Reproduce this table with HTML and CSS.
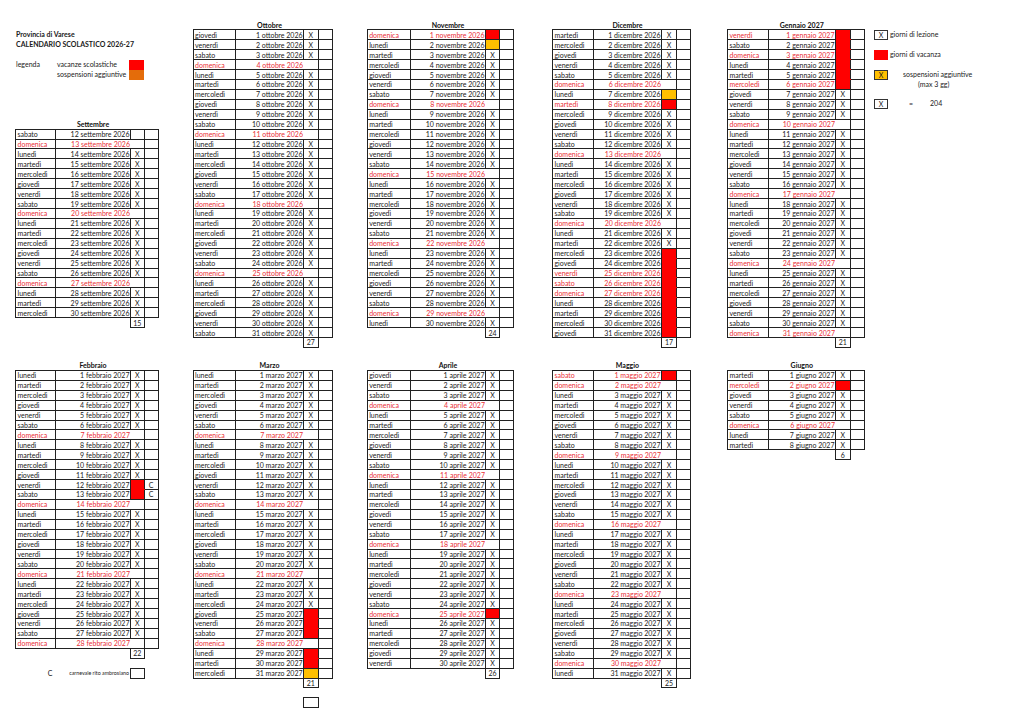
FILE: index.html
```html
<!DOCTYPE html>
<html lang="it">
<head>
<meta charset="utf-8">
<title>Calendario scolastico 2026-27 - Provincia di Varese</title>
<link rel="stylesheet" href="styles.css">
</head>
<body>
<main class="sheet">
<section class="blk top">
  <div class="col">
    <div class="intro">
      <div class="ln bold r2">Provincia di Varese</div>
      <div class="ln bold r3">CALENDARIO SCOLASTICO 2026-27</div>
      <div class="lg r5">legenda</div>
      <div class="lt r5">vacanze scolastiche</div>
      <div class="sw red r5"></div>
      <div class="lt r6">sospensioni aggiuntive</div>
      <div class="sw org r6"></div>
    </div>
    <table class="m ga">
      <colgroup><col class="c1"><col class="c2"><col class="c3"><col class="c4"></colgroup>
      <tr class="t"><th></th><th>Settembre</th><th></th><th></th></tr>
      <tr><td>sabato</td><td>12 settembre 2026</td><td></td><td></td></tr>
      <tr class="r"><td>domenica</td><td>13 settembre 2026</td><td></td><td></td></tr>
      <tr><td>lunedì</td><td>14 settembre 2026</td><td>X</td><td></td></tr>
      <tr><td>martedì</td><td>15 settembre 2026</td><td>X</td><td></td></tr>
      <tr><td>mercoledì</td><td>16 settembre 2026</td><td>X</td><td></td></tr>
      <tr><td>giovedì</td><td>17 settembre 2026</td><td>X</td><td></td></tr>
      <tr><td>venerdì</td><td>18 settembre 2026</td><td>X</td><td></td></tr>
      <tr><td>sabato</td><td>19 settembre 2026</td><td>X</td><td></td></tr>
      <tr class="r"><td>domenica</td><td>20 settembre 2026</td><td></td><td></td></tr>
      <tr><td>lunedì</td><td>21 settembre 2026</td><td>X</td><td></td></tr>
      <tr><td>martedì</td><td>22 settembre 2026</td><td>X</td><td></td></tr>
      <tr><td>mercoledì</td><td>23 settembre 2026</td><td>X</td><td></td></tr>
      <tr><td>giovedì</td><td>24 settembre 2026</td><td>X</td><td></td></tr>
      <tr><td>venerdì</td><td>25 settembre 2026</td><td>X</td><td></td></tr>
      <tr><td>sabato</td><td>26 settembre 2026</td><td>X</td><td></td></tr>
      <tr class="r"><td>domenica</td><td>27 settembre 2026</td><td></td><td></td></tr>
      <tr><td>lunedì</td><td>28 settembre 2026</td><td>X</td><td></td></tr>
      <tr><td>martedì</td><td>29 settembre 2026</td><td>X</td><td></td></tr>
      <tr><td>mercoledì</td><td>30 settembre 2026</td><td>X</td><td></td></tr>
      <tr class="tot"><td></td><td></td><td>15</td><td></td></tr>
    </table>
  </div>

  <div class="col">
    <table class="m gb">
      <colgroup><col class="c1"><col class="c2"><col class="c3"><col class="c4"></colgroup>
      <tr class="t"><th></th><th>Ottobre</th><th></th><th></th></tr>
      <tr><td>giovedì</td><td>1 ottobre 2026</td><td>X</td><td></td></tr>
      <tr><td>venerdì</td><td>2 ottobre 2026</td><td>X</td><td></td></tr>
      <tr><td>sabato</td><td>3 ottobre 2026</td><td>X</td><td></td></tr>
      <tr class="r"><td>domenica</td><td>4 ottobre 2026</td><td></td><td></td></tr>
      <tr><td>lunedì</td><td>5 ottobre 2026</td><td>X</td><td></td></tr>
      <tr><td>martedì</td><td>6 ottobre 2026</td><td>X</td><td></td></tr>
      <tr><td>mercoledì</td><td>7 ottobre 2026</td><td>X</td><td></td></tr>
      <tr><td>giovedì</td><td>8 ottobre 2026</td><td>X</td><td></td></tr>
      <tr><td>venerdì</td><td>9 ottobre 2026</td><td>X</td><td></td></tr>
      <tr><td>sabato</td><td>10 ottobre 2026</td><td>X</td><td></td></tr>
      <tr class="r"><td>domenica</td><td>11 ottobre 2026</td><td></td><td></td></tr>
      <tr><td>lunedì</td><td>12 ottobre 2026</td><td>X</td><td></td></tr>
      <tr><td>martedì</td><td>13 ottobre 2026</td><td>X</td><td></td></tr>
      <tr><td>mercoledì</td><td>14 ottobre 2026</td><td>X</td><td></td></tr>
      <tr><td>giovedì</td><td>15 ottobre 2026</td><td>X</td><td></td></tr>
      <tr><td>venerdì</td><td>16 ottobre 2026</td><td>X</td><td></td></tr>
      <tr><td>sabato</td><td>17 ottobre 2026</td><td>X</td><td></td></tr>
      <tr class="r"><td>domenica</td><td>18 ottobre 2026</td><td></td><td></td></tr>
      <tr><td>lunedì</td><td>19 ottobre 2026</td><td>X</td><td></td></tr>
      <tr><td>martedì</td><td>20 ottobre 2026</td><td>X</td><td></td></tr>
      <tr><td>mercoledì</td><td>21 ottobre 2026</td><td>X</td><td></td></tr>
      <tr><td>giovedì</td><td>22 ottobre 2026</td><td>X</td><td></td></tr>
      <tr><td>venerdì</td><td>23 ottobre 2026</td><td>X</td><td></td></tr>
      <tr><td>sabato</td><td>24 ottobre 2026</td><td>X</td><td></td></tr>
      <tr class="r"><td>domenica</td><td>25 ottobre 2026</td><td></td><td></td></tr>
      <tr><td>lunedì</td><td>26 ottobre 2026</td><td>X</td><td></td></tr>
      <tr><td>martedì</td><td>27 ottobre 2026</td><td>X</td><td></td></tr>
      <tr><td>mercoledì</td><td>28 ottobre 2026</td><td>X</td><td></td></tr>
      <tr><td>giovedì</td><td>29 ottobre 2026</td><td>X</td><td></td></tr>
      <tr><td>venerdì</td><td>30 ottobre 2026</td><td>X</td><td></td></tr>
      <tr><td>sabato</td><td>31 ottobre 2026</td><td>X</td><td></td></tr>
      <tr class="tot"><td></td><td></td><td>27</td><td></td></tr>
    </table>
  </div>

  <div class="col">
    <table class="m gc">
      <colgroup><col class="c1"><col class="c2"><col class="c3"><col class="c4"></colgroup>
      <tr class="t"><th></th><th>Novembre</th><th></th><th></th></tr>
      <tr class="r"><td>domenica</td><td>1 novembre 2026</td><td class="v"></td><td></td></tr>
      <tr><td>lunedì</td><td>2 novembre 2026</td><td class="a"></td><td></td></tr>
      <tr><td>martedì</td><td>3 novembre 2026</td><td>X</td><td></td></tr>
      <tr><td>mercoledì</td><td>4 novembre 2026</td><td>X</td><td></td></tr>
      <tr><td>giovedì</td><td>5 novembre 2026</td><td>X</td><td></td></tr>
      <tr><td>venerdì</td><td>6 novembre 2026</td><td>X</td><td></td></tr>
      <tr><td>sabato</td><td>7 novembre 2026</td><td>X</td><td></td></tr>
      <tr class="r"><td>domenica</td><td>8 novembre 2026</td><td></td><td></td></tr>
      <tr><td>lunedì</td><td>9 novembre 2026</td><td>X</td><td></td></tr>
      <tr><td>martedì</td><td>10 novembre 2026</td><td>X</td><td></td></tr>
      <tr><td>mercoledì</td><td>11 novembre 2026</td><td>X</td><td></td></tr>
      <tr><td>giovedì</td><td>12 novembre 2026</td><td>X</td><td></td></tr>
      <tr><td>venerdì</td><td>13 novembre 2026</td><td>X</td><td></td></tr>
      <tr><td>sabato</td><td>14 novembre 2026</td><td>X</td><td></td></tr>
      <tr class="r"><td>domenica</td><td>15 novembre 2026</td><td></td><td></td></tr>
      <tr><td>lunedì</td><td>16 novembre 2026</td><td>X</td><td></td></tr>
      <tr><td>martedì</td><td>17 novembre 2026</td><td>X</td><td></td></tr>
      <tr><td>mercoledì</td><td>18 novembre 2026</td><td>X</td><td></td></tr>
      <tr><td>giovedì</td><td>19 novembre 2026</td><td>X</td><td></td></tr>
      <tr><td>venerdì</td><td>20 novembre 2026</td><td>X</td><td></td></tr>
      <tr><td>sabato</td><td>21 novembre 2026</td><td>X</td><td></td></tr>
      <tr class="r"><td>domenica</td><td>22 novembre 2026</td><td></td><td></td></tr>
      <tr><td>lunedì</td><td>23 novembre 2026</td><td>X</td><td></td></tr>
      <tr><td>martedì</td><td>24 novembre 2026</td><td>X</td><td></td></tr>
      <tr><td>mercoledì</td><td>25 novembre 2026</td><td>X</td><td></td></tr>
      <tr><td>giovedì</td><td>26 novembre 2026</td><td>X</td><td></td></tr>
      <tr><td>venerdì</td><td>27 novembre 2026</td><td>X</td><td></td></tr>
      <tr><td>sabato</td><td>28 novembre 2026</td><td>X</td><td></td></tr>
      <tr class="r"><td>domenica</td><td>29 novembre 2026</td><td></td><td></td></tr>
      <tr><td>lunedì</td><td>30 novembre 2026</td><td>X</td><td></td></tr>
      <tr class="tot"><td></td><td></td><td>24</td><td></td></tr>
    </table>
  </div>

  <div class="col">
    <table class="m gd">
      <colgroup><col class="c1"><col class="c2"><col class="c3"><col class="c4"></colgroup>
      <tr class="t"><th></th><th>Dicembre</th><th></th><th></th></tr>
      <tr><td>martedì</td><td>1 dicembre 2026</td><td>X</td><td></td></tr>
      <tr><td>mercoledì</td><td>2 dicembre 2026</td><td>X</td><td></td></tr>
      <tr><td>giovedì</td><td>3 dicembre 2026</td><td>X</td><td></td></tr>
      <tr><td>venerdì</td><td>4 dicembre 2026</td><td>X</td><td></td></tr>
      <tr><td>sabato</td><td>5 dicembre 2026</td><td>X</td><td></td></tr>
      <tr class="r"><td>domenica</td><td>6 dicembre 2026</td><td></td><td></td></tr>
      <tr><td>lunedì</td><td>7 dicembre 2026</td><td class="a"></td><td></td></tr>
      <tr class="r"><td>martedì</td><td>8 dicembre 2026</td><td class="v"></td><td></td></tr>
      <tr><td>mercoledì</td><td>9 dicembre 2026</td><td>X</td><td></td></tr>
      <tr><td>giovedì</td><td>10 dicembre 2026</td><td>X</td><td></td></tr>
      <tr><td>venerdì</td><td>11 dicembre 2026</td><td>X</td><td></td></tr>
      <tr><td>sabato</td><td>12 dicembre 2026</td><td>X</td><td></td></tr>
      <tr class="r"><td>domenica</td><td>13 dicembre 2026</td><td></td><td></td></tr>
      <tr><td>lunedì</td><td>14 dicembre 2026</td><td>X</td><td></td></tr>
      <tr><td>martedì</td><td>15 dicembre 2026</td><td>X</td><td></td></tr>
      <tr><td>mercoledì</td><td>16 dicembre 2026</td><td>X</td><td></td></tr>
      <tr><td>giovedì</td><td>17 dicembre 2026</td><td>X</td><td></td></tr>
      <tr><td>venerdì</td><td>18 dicembre 2026</td><td>X</td><td></td></tr>
      <tr><td>sabato</td><td>19 dicembre 2026</td><td>X</td><td></td></tr>
      <tr class="r"><td>domenica</td><td>20 dicembre 2026</td><td></td><td></td></tr>
      <tr><td>lunedì</td><td>21 dicembre 2026</td><td>X</td><td></td></tr>
      <tr><td>martedì</td><td>22 dicembre 2026</td><td>X</td><td></td></tr>
      <tr><td>mercoledì</td><td>23 dicembre 2026</td><td class="vv"></td><td></td></tr>
      <tr><td>giovedì</td><td>24 dicembre 2026</td><td class="vv"></td><td></td></tr>
      <tr class="r"><td>venerdì</td><td>25 dicembre 2026</td><td class="vv"></td><td></td></tr>
      <tr class="r"><td>sabato</td><td>26 dicembre 2026</td><td class="vv"></td><td></td></tr>
      <tr class="r"><td>domenica</td><td>27 dicembre 2026</td><td class="vv"></td><td></td></tr>
      <tr><td>lunedì</td><td>28 dicembre 2026</td><td class="vv"></td><td></td></tr>
      <tr><td>martedì</td><td>29 dicembre 2026</td><td class="vv"></td><td></td></tr>
      <tr><td>mercoledì</td><td>30 dicembre 2026</td><td class="vv"></td><td></td></tr>
      <tr><td>giovedì</td><td>31 dicembre 2026</td><td class="v"></td><td></td></tr>
      <tr class="tot"><td></td><td></td><td>17</td><td></td></tr>
    </table>
  </div>

  <div class="col">
    <table class="m ge">
      <colgroup><col class="c1"><col class="c2"><col class="c3"><col class="c4"></colgroup>
      <tr class="t"><th></th><th>Gennaio 2027</th><th></th><th></th></tr>
      <tr class="r"><td>venerdì</td><td>1 gennaio 2027</td><td class="vv"></td><td></td></tr>
      <tr><td>sabato</td><td>2 gennaio 2027</td><td class="vv"></td><td></td></tr>
      <tr class="r"><td>domenica</td><td>3 gennaio 2027</td><td class="vv"></td><td></td></tr>
      <tr><td>lunedì</td><td>4 gennaio 2027</td><td class="vv"></td><td></td></tr>
      <tr><td>martedì</td><td>5 gennaio 2027</td><td class="vv"></td><td></td></tr>
      <tr class="r"><td>mercoledì</td><td>6 gennaio 2027</td><td class="v"></td><td></td></tr>
      <tr><td>giovedì</td><td>7 gennaio 2027</td><td>X</td><td></td></tr>
      <tr><td>venerdì</td><td>8 gennaio 2027</td><td>X</td><td></td></tr>
      <tr><td>sabato</td><td>9 gennaio 2027</td><td>X</td><td></td></tr>
      <tr class="r"><td>domenica</td><td>10 gennaio 2027</td><td></td><td></td></tr>
      <tr><td>lunedì</td><td>11 gennaio 2027</td><td>X</td><td></td></tr>
      <tr><td>martedì</td><td>12 gennaio 2027</td><td>X</td><td></td></tr>
      <tr><td>mercoledì</td><td>13 gennaio 2027</td><td>X</td><td></td></tr>
      <tr><td>giovedì</td><td>14 gennaio 2027</td><td>X</td><td></td></tr>
      <tr><td>venerdì</td><td>15 gennaio 2027</td><td>X</td><td></td></tr>
      <tr><td>sabato</td><td>16 gennaio 2027</td><td>X</td><td></td></tr>
      <tr class="r"><td>domenica</td><td>17 gennaio 2027</td><td></td><td></td></tr>
      <tr><td>lunedì</td><td>18 gennaio 2027</td><td>X</td><td></td></tr>
      <tr><td>martedì</td><td>19 gennaio 2027</td><td>X</td><td></td></tr>
      <tr><td>mercoledì</td><td>20 gennaio 2027</td><td>X</td><td></td></tr>
      <tr><td>giovedì</td><td>21 gennaio 2027</td><td>X</td><td></td></tr>
      <tr><td>venerdì</td><td>22 gennaio 2027</td><td>X</td><td></td></tr>
      <tr><td>sabato</td><td>23 gennaio 2027</td><td>X</td><td></td></tr>
      <tr class="r"><td>domenica</td><td>24 gennaio 2027</td><td></td><td></td></tr>
      <tr><td>lunedì</td><td>25 gennaio 2027</td><td>X</td><td></td></tr>
      <tr><td>martedì</td><td>26 gennaio 2027</td><td>X</td><td></td></tr>
      <tr><td>mercoledì</td><td>27 gennaio 2027</td><td>X</td><td></td></tr>
      <tr><td>giovedì</td><td>28 gennaio 2027</td><td>X</td><td></td></tr>
      <tr><td>venerdì</td><td>29 gennaio 2027</td><td>X</td><td></td></tr>
      <tr><td>sabato</td><td>30 gennaio 2027</td><td>X</td><td></td></tr>
      <tr class="r"><td>domenica</td><td>31 gennaio 2027</td><td></td><td></td></tr>
      <tr class="tot"><td></td><td></td><td>21</td><td></td></tr>
    </table>
  </div>

  <div class="legend">
    <div class="lrow g2"><span class="box">X</span><span class="ltx">giorni di lezione</span></div>
    <div class="lrow g4"><span class="box fred"></span><span class="ltx">giorni di vacanza</span></div>
    <div class="lrow g6"><span class="box famb">X</span><span class="ltx sosp">sospensioni aggiuntive</span></div>
    <div class="lrow g7"><span class="maxg">(max 3 gg)</span></div>
    <div class="lrow g9"><span class="box">X</span><span class="eq">=</span><span class="sum">204</span></div>
  </div>
</section>

<section class="blk bot">
  <div class="col">
    <table class="m ga">
      <colgroup><col class="c1"><col class="c2"><col class="c3"><col class="c4"></colgroup>
      <tr class="t"><th></th><th>Febbraio</th><th></th><th></th></tr>
      <tr><td>lunedì</td><td>1 febbraio 2027</td><td>X</td><td></td></tr>
      <tr><td>martedì</td><td>2 febbraio 2027</td><td>X</td><td></td></tr>
      <tr><td>mercoledì</td><td>3 febbraio 2027</td><td>X</td><td></td></tr>
      <tr><td>giovedì</td><td>4 febbraio 2027</td><td>X</td><td></td></tr>
      <tr><td>venerdì</td><td>5 febbraio 2027</td><td>X</td><td></td></tr>
      <tr><td>sabato</td><td>6 febbraio 2027</td><td>X</td><td></td></tr>
      <tr class="r"><td>domenica</td><td>7 febbraio 2027</td><td></td><td></td></tr>
      <tr><td>lunedì</td><td>8 febbraio 2027</td><td>X</td><td></td></tr>
      <tr><td>martedì</td><td>9 febbraio 2027</td><td>X</td><td></td></tr>
      <tr><td>mercoledì</td><td>10 febbraio 2027</td><td>X</td><td></td></tr>
      <tr><td>giovedì</td><td>11 febbraio 2027</td><td>X</td><td></td></tr>
      <tr><td>venerdì</td><td>12 febbraio 2027</td><td class="vv"></td><td>C</td></tr>
      <tr><td>sabato</td><td>13 febbraio 2027</td><td class="v"></td><td>C</td></tr>
      <tr class="r"><td>domenica</td><td>14 febbraio 2027</td><td></td><td></td></tr>
      <tr><td>lunedì</td><td>15 febbraio 2027</td><td>X</td><td></td></tr>
      <tr><td>martedì</td><td>16 febbraio 2027</td><td>X</td><td></td></tr>
      <tr><td>mercoledì</td><td>17 febbraio 2027</td><td>X</td><td></td></tr>
      <tr><td>giovedì</td><td>18 febbraio 2027</td><td>X</td><td></td></tr>
      <tr><td>venerdì</td><td>19 febbraio 2027</td><td>X</td><td></td></tr>
      <tr><td>sabato</td><td>20 febbraio 2027</td><td>X</td><td></td></tr>
      <tr class="r"><td>domenica</td><td>21 febbraio 2027</td><td></td><td></td></tr>
      <tr><td>lunedì</td><td>22 febbraio 2027</td><td>X</td><td></td></tr>
      <tr><td>martedì</td><td>23 febbraio 2027</td><td>X</td><td></td></tr>
      <tr><td>mercoledì</td><td>24 febbraio 2027</td><td>X</td><td></td></tr>
      <tr><td>giovedì</td><td>25 febbraio 2027</td><td>X</td><td></td></tr>
      <tr><td>venerdì</td><td>26 febbraio 2027</td><td>X</td><td></td></tr>
      <tr><td>sabato</td><td>27 febbraio 2027</td><td>X</td><td></td></tr>
      <tr class="r"><td>domenica</td><td>28 febbraio 2027</td><td></td><td></td></tr>
      <tr class="tot"><td></td><td></td><td>22</td><td></td></tr>
      <tr class="sp3"><td colspan="4"></td></tr>
      <tr class="note"><td class="cc">C</td><td class="cn">carnevale rito ambrosiano</td><td class="bx"></td><td></td></tr>
    </table>
  </div>

  <div class="col">
    <table class="m gb">
      <colgroup><col class="c1"><col class="c2"><col class="c3"><col class="c4"></colgroup>
      <tr class="t"><th></th><th>Marzo</th><th></th><th></th></tr>
      <tr><td>lunedì</td><td>1 marzo 2027</td><td>X</td><td></td></tr>
      <tr><td>martedì</td><td>2 marzo 2027</td><td>X</td><td></td></tr>
      <tr><td>mercoledì</td><td>3 marzo 2027</td><td>X</td><td></td></tr>
      <tr><td>giovedì</td><td>4 marzo 2027</td><td>X</td><td></td></tr>
      <tr><td>venerdì</td><td>5 marzo 2027</td><td>X</td><td></td></tr>
      <tr><td>sabato</td><td>6 marzo 2027</td><td>X</td><td></td></tr>
      <tr class="r"><td>domenica</td><td>7 marzo 2027</td><td></td><td></td></tr>
      <tr><td>lunedì</td><td>8 marzo 2027</td><td>X</td><td></td></tr>
      <tr><td>martedì</td><td>9 marzo 2027</td><td>X</td><td></td></tr>
      <tr><td>mercoledì</td><td>10 marzo 2027</td><td>X</td><td></td></tr>
      <tr><td>giovedì</td><td>11 marzo 2027</td><td>X</td><td></td></tr>
      <tr><td>venerdì</td><td>12 marzo 2027</td><td>X</td><td></td></tr>
      <tr><td>sabato</td><td>13 marzo 2027</td><td>X</td><td></td></tr>
      <tr class="r"><td>domenica</td><td>14 marzo 2027</td><td></td><td></td></tr>
      <tr><td>lunedì</td><td>15 marzo 2027</td><td>X</td><td></td></tr>
      <tr><td>martedì</td><td>16 marzo 2027</td><td>X</td><td></td></tr>
      <tr><td>mercoledì</td><td>17 marzo 2027</td><td>X</td><td></td></tr>
      <tr><td>giovedì</td><td>18 marzo 2027</td><td>X</td><td></td></tr>
      <tr><td>venerdì</td><td>19 marzo 2027</td><td>X</td><td></td></tr>
      <tr><td>sabato</td><td>20 marzo 2027</td><td>X</td><td></td></tr>
      <tr class="r"><td>domenica</td><td>21 marzo 2027</td><td></td><td></td></tr>
      <tr><td>lunedì</td><td>22 marzo 2027</td><td>X</td><td></td></tr>
      <tr><td>martedì</td><td>23 marzo 2027</td><td>X</td><td></td></tr>
      <tr><td>mercoledì</td><td>24 marzo 2027</td><td>X</td><td></td></tr>
      <tr><td>giovedì</td><td>25 marzo 2027</td><td class="vv"></td><td></td></tr>
      <tr><td>venerdì</td><td>26 marzo 2027</td><td class="vv"></td><td></td></tr>
      <tr><td>sabato</td><td>27 marzo 2027</td><td class="v"></td><td></td></tr>
      <tr class="r"><td>domenica</td><td>28 marzo 2027</td><td></td><td></td></tr>
      <tr><td>lunedì</td><td>29 marzo 2027</td><td class="vv"></td><td></td></tr>
      <tr><td>martedì</td><td>30 marzo 2027</td><td class="v"></td><td></td></tr>
      <tr><td>mercoledì</td><td>31 marzo 2027</td><td class="a"></td><td></td></tr>
      <tr class="tot"><td></td><td></td><td>21</td><td></td></tr>
      <tr class="sp1"><td colspan="4"></td></tr>
      <tr class="note"><td></td><td></td><td class="bx"></td><td></td></tr>
    </table>
  </div>

  <div class="col">
    <table class="m gc">
      <colgroup><col class="c1"><col class="c2"><col class="c3"><col class="c4"></colgroup>
      <tr class="t"><th></th><th>Aprile</th><th></th><th></th></tr>
      <tr><td>giovedì</td><td>1 aprile 2027</td><td>X</td><td></td></tr>
      <tr><td>venerdì</td><td>2 aprile 2027</td><td>X</td><td></td></tr>
      <tr><td>sabato</td><td>3 aprile 2027</td><td>X</td><td></td></tr>
      <tr class="r"><td>domenica</td><td>4 aprile 2027</td><td></td><td></td></tr>
      <tr><td>lunedì</td><td>5 aprile 2027</td><td>X</td><td></td></tr>
      <tr><td>martedì</td><td>6 aprile 2027</td><td>X</td><td></td></tr>
      <tr><td>mercoledì</td><td>7 aprile 2027</td><td>X</td><td></td></tr>
      <tr><td>giovedì</td><td>8 aprile 2027</td><td>X</td><td></td></tr>
      <tr><td>venerdì</td><td>9 aprile 2027</td><td>X</td><td></td></tr>
      <tr><td>sabato</td><td>10 aprile 2027</td><td>X</td><td></td></tr>
      <tr class="r"><td>domenica</td><td>11 aprile 2027</td><td></td><td></td></tr>
      <tr><td>lunedì</td><td>12 aprile 2027</td><td>X</td><td></td></tr>
      <tr><td>martedì</td><td>13 aprile 2027</td><td>X</td><td></td></tr>
      <tr><td>mercoledì</td><td>14 aprile 2027</td><td>X</td><td></td></tr>
      <tr><td>giovedì</td><td>15 aprile 2027</td><td>X</td><td></td></tr>
      <tr><td>venerdì</td><td>16 aprile 2027</td><td>X</td><td></td></tr>
      <tr><td>sabato</td><td>17 aprile 2027</td><td>X</td><td></td></tr>
      <tr class="r"><td>domenica</td><td>18 aprile 2027</td><td></td><td></td></tr>
      <tr><td>lunedì</td><td>19 aprile 2027</td><td>X</td><td></td></tr>
      <tr><td>martedì</td><td>20 aprile 2027</td><td>X</td><td></td></tr>
      <tr><td>mercoledì</td><td>21 aprile 2027</td><td>X</td><td></td></tr>
      <tr><td>giovedì</td><td>22 aprile 2027</td><td>X</td><td></td></tr>
      <tr><td>venerdì</td><td>23 aprile 2027</td><td>X</td><td></td></tr>
      <tr><td>sabato</td><td>24 aprile 2027</td><td>X</td><td></td></tr>
      <tr class="r"><td>domenica</td><td>25 aprile 2027</td><td class="v"></td><td></td></tr>
      <tr><td>lunedì</td><td>26 aprile 2027</td><td>X</td><td></td></tr>
      <tr><td>martedì</td><td>27 aprile 2027</td><td>X</td><td></td></tr>
      <tr><td>mercoledì</td><td>28 aprile 2027</td><td>X</td><td></td></tr>
      <tr><td>giovedì</td><td>29 aprile 2027</td><td>X</td><td></td></tr>
      <tr><td>venerdì</td><td>30 aprile 2027</td><td>X</td><td></td></tr>
      <tr class="tot"><td></td><td></td><td>26</td><td></td></tr>
    </table>
  </div>

  <div class="col">
    <table class="m gd">
      <colgroup><col class="c1"><col class="c2"><col class="c3"><col class="c4"></colgroup>
      <tr class="t"><th></th><th>Maggio</th><th></th><th></th></tr>
      <tr class="r"><td>sabato</td><td>1 maggio 2027</td><td class="v"></td><td></td></tr>
      <tr class="r"><td>domenica</td><td>2 maggio 2027</td><td></td><td></td></tr>
      <tr><td>lunedì</td><td>3 maggio 2027</td><td>X</td><td></td></tr>
      <tr><td>martedì</td><td>4 maggio 2027</td><td>X</td><td></td></tr>
      <tr><td>mercoledì</td><td>5 maggio 2027</td><td>X</td><td></td></tr>
      <tr><td>giovedì</td><td>6 maggio 2027</td><td>X</td><td></td></tr>
      <tr><td>venerdì</td><td>7 maggio 2027</td><td>X</td><td></td></tr>
      <tr><td>sabato</td><td>8 maggio 2027</td><td>X</td><td></td></tr>
      <tr class="r"><td>domenica</td><td>9 maggio 2027</td><td></td><td></td></tr>
      <tr><td>lunedì</td><td>10 maggio 2027</td><td>X</td><td></td></tr>
      <tr><td>martedì</td><td>11 maggio 2027</td><td>X</td><td></td></tr>
      <tr><td>mercoledì</td><td>12 maggio 2027</td><td>X</td><td></td></tr>
      <tr><td>giovedì</td><td>13 maggio 2027</td><td>X</td><td></td></tr>
      <tr><td>venerdì</td><td>14 maggio 2027</td><td>X</td><td></td></tr>
      <tr><td>sabato</td><td>15 maggio 2027</td><td>X</td><td></td></tr>
      <tr class="r"><td>domenica</td><td>16 maggio 2027</td><td></td><td></td></tr>
      <tr><td>lunedì</td><td>17 maggio 2027</td><td>X</td><td></td></tr>
      <tr><td>martedì</td><td>18 maggio 2027</td><td>X</td><td></td></tr>
      <tr><td>mercoledì</td><td>19 maggio 2027</td><td>X</td><td></td></tr>
      <tr><td>giovedì</td><td>20 maggio 2027</td><td>X</td><td></td></tr>
      <tr><td>venerdì</td><td>21 maggio 2027</td><td>X</td><td></td></tr>
      <tr><td>sabato</td><td>22 maggio 2027</td><td>X</td><td></td></tr>
      <tr class="r"><td>domenica</td><td>23 maggio 2027</td><td></td><td></td></tr>
      <tr><td>lunedì</td><td>24 maggio 2027</td><td>X</td><td></td></tr>
      <tr><td>martedì</td><td>25 maggio 2027</td><td>X</td><td></td></tr>
      <tr><td>mercoledì</td><td>26 maggio 2027</td><td>X</td><td></td></tr>
      <tr><td>giovedì</td><td>27 maggio 2027</td><td>X</td><td></td></tr>
      <tr><td>venerdì</td><td>28 maggio 2027</td><td>X</td><td></td></tr>
      <tr><td>sabato</td><td>29 maggio 2027</td><td>X</td><td></td></tr>
      <tr class="r"><td>domenica</td><td>30 maggio 2027</td><td></td><td></td></tr>
      <tr><td>lunedì</td><td>31 maggio 2027</td><td>X</td><td></td></tr>
      <tr class="tot"><td></td><td></td><td>25</td><td></td></tr>
    </table>
  </div>

  <div class="col">
    <table class="m ge">
      <colgroup><col class="c1"><col class="c2"><col class="c3"><col class="c4"></colgroup>
      <tr class="t"><th></th><th>Giugno</th><th></th><th></th></tr>
      <tr><td>martedì</td><td>1 giugno 2027</td><td>X</td><td></td></tr>
      <tr class="r"><td>mercoledì</td><td>2 giugno 2027</td><td class="v"></td><td></td></tr>
      <tr><td>giovedì</td><td>3 giugno 2027</td><td>X</td><td></td></tr>
      <tr><td>venerdì</td><td>4 giugno 2027</td><td>X</td><td></td></tr>
      <tr><td>sabato</td><td>5 giugno 2027</td><td>X</td><td></td></tr>
      <tr class="r"><td>domenica</td><td>6 giugno 2027</td><td></td><td></td></tr>
      <tr><td>lunedì</td><td>7 giugno 2027</td><td>X</td><td></td></tr>
      <tr><td>martedì</td><td>8 giugno 2027</td><td>X</td><td></td></tr>
      <tr class="tot"><td></td><td></td><td>6</td><td></td></tr>
    </table>
  </div>
</section>
</main>
</body>
</html>
```

FILE: styles.css
```css
html, body {
  margin: 0;
  padding: 0;
  background: #fff;
}

body {
  font-family: Lato, "Liberation Sans", sans-serif;
  font-size: 7px;
  color: #1a1a1a;
  width: 1024px;
  height: 724px;
  overflow: hidden;
}

.sheet {
  padding: 20px 0 0 15px;
}

.blk {
  display: grid;
  grid-template-columns: 177.5px 174.2px 185.3px 175px 147px 140px;
  align-items: start;
}

.top {
  height: 340.5px;
}

/* ---------- intro (top-left) ---------- */
.intro {
  display: grid;
  grid-template-columns: 40px 75px 13.5px;
  grid-template-rows: repeat(10, 9.93px);
  line-height: 9.93px;
  white-space: nowrap;
}

.intro .ln {
  grid-column: 1 / 4;
  padding-left: 1px;
}

.bold { font-weight: 700; }

.intro .lg {
  grid-column: 1;
  padding-left: 1px;
}

.intro .lt {
  grid-column: 2;
  padding-left: 2px;
}

.intro .sw {
  grid-column: 3;
  margin: 0 -0.5px 0 -1px;
}

.r2 { grid-row: 2; }
.r3 { grid-row: 3; }
.r5 { grid-row: 5; }
.r6 { grid-row: 6; }

.red { background: #ff0000; }
.org { background: #e46c0a; }

/* ---------- month tables ---------- */
table.m {
  border-collapse: collapse;
  table-layout: fixed;
}

table.m tr {
  height: 9.93px;
}

table.m td,
table.m th {
  padding: 0 1px;
  border: 1px solid #222;
  font-size: 7px;
  line-height: 8px;
  white-space: nowrap;
  overflow: hidden;
  font-weight: 400;
}

table.m td:nth-child(1) { text-align: left; padding-left: 1.5px; }
table.m td:nth-child(2) { text-align: right; padding-right: 0.5px; }
table.m td:nth-child(3),
table.m td:nth-child(4) { text-align: center; padding: 0; }

.ga .c1 { width: 40px; }
.ga .c2 { width: 75px; }
.ga .c3 { width: 13.5px; }
.ga .c4 { width: 14px; }

.gb .c1 { width: 42.5px; }
.gb .c2 { width: 68px; }
.gb .c3 { width: 14.5px; }
.gb .c4 { width: 14px; }

.gc .c1 { width: 43.3px; }
.gc .c2 { width: 75px; }
.gc .c3 { width: 14.3px; }
.gc .c4 { width: 14px; }

.gd .c1 { width: 41px; }
.gd .c2 { width: 68px; }
.gd .c3 { width: 15px; }
.gd .c4 { width: 13.6px; }

.ge .c1 { width: 40.7px; }
.ge .c2 { width: 67.3px; }
.ge .c3 { width: 14.7px; }
.ge .c4 { width: 14px; }

/* title row */
table.m tr.t th {
  border: none;
  font-weight: 700;
  text-align: center;
  overflow: visible;
  color: #111;
}

/* red text rows (Sundays & holidays) */
tr.r td { color: #ea2f37; }

tr.r td:nth-child(3):not(.v):not(.vv) {
  border-left-style: hidden;
}

/* fills */
td.v { background: #ff0000; }
td.vv { background: #ff0000; border-bottom-color: #ff0000 !important; }
td.a { background: #ffc000; }

/* totals */
table.m tr.tot td {
  border: none;
}

table.m tr.tot td:nth-child(3) {
  border: 1px solid #222;
}

.sp3 { height: 29.79px; }
.sp1 { height: 9.93px; }

table.m tr.sp3 td,
table.m tr.sp1 td,
table.m tr.note td {
  border: none;
}

table.m tr.note td.bx {
  border: 1px solid #222;
}

table.m tr.note td.cc {
  text-align: right;
  padding-right: 3px;
  font-size: 7px;
}

table.m tr.note td.cn {
  font-size: 5.3px;
  text-align: right;
  padding-right: 1px;
}

/* ---------- right legend ---------- */
.legend {
  display: grid;
  grid-template-rows: repeat(10, 9.93px);
  white-space: nowrap;
}

.lrow {
  display: flex;
  align-items: center;
  height: 9.93px;
  line-height: 9.93px;
}

.g2 { grid-row: 2; }
.g4 { grid-row: 4; }
.g6 { grid-row: 6; }
.g7 { grid-row: 7; }
.g9 { grid-row: 9; }

.box {
  box-sizing: border-box;
  width: 14px;
  height: 10px;
  border: 1px solid #333;
  text-align: center;
  line-height: 8px;
  font-size: 7px;
  flex: none;
}

.box.fred { background: #ff0000; border-color: #ff0000; }
.box.famb { background: #ffc000; }

.ltx { padding-left: 2px; }
.ltx.sosp { padding-left: 15px; }

.maxg { padding-left: 44px; }

.eq { padding-left: 21px; }
.sum { padding-left: 17px; }
```
